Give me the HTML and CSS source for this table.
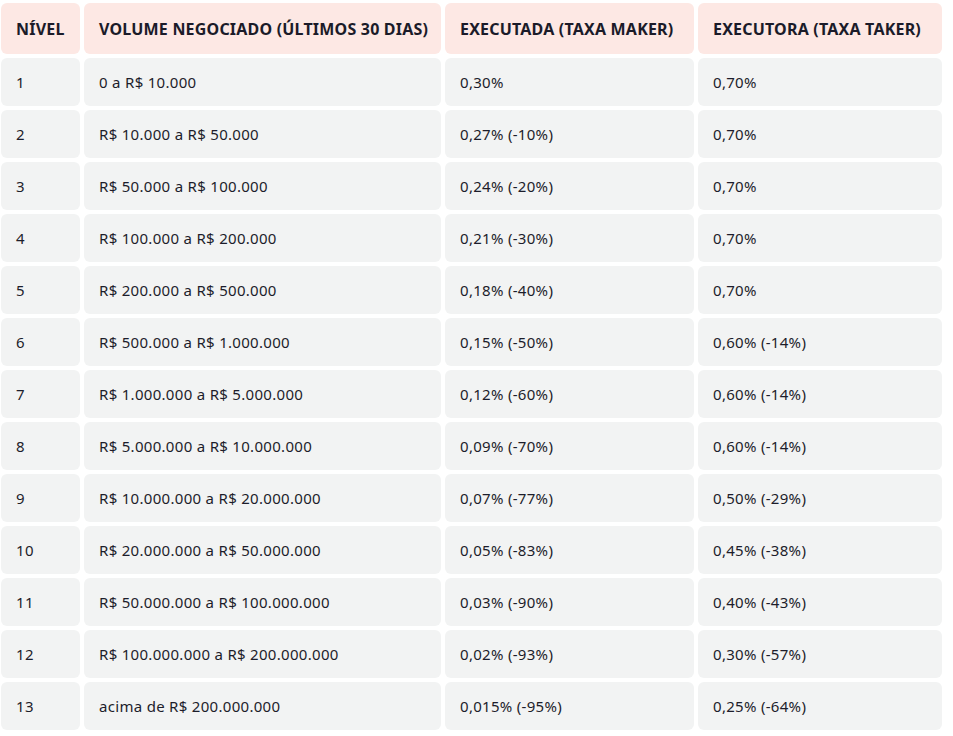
FILE: index.html
```html
<!DOCTYPE html>
<html lang="pt-BR">
<head>
<meta charset="utf-8">
<link rel="stylesheet" href="styles.css">
</head>
<body>
<div class="fees">
  <div class="cell head">NÍVEL</div>
  <div class="cell head">VOLUME NEGOCIADO (ÚLTIMOS 30 DIAS)</div>
  <div class="cell head">EXECUTADA (TAXA MAKER)</div>
  <div class="cell head">EXECUTORA (TAXA TAKER)</div>

  <div class="cell">1</div><div class="cell">0 a R$ 10.000</div><div class="cell">0,30%</div><div class="cell">0,70%</div>
  <div class="cell">2</div><div class="cell">R$ 10.000 a R$ 50.000</div><div class="cell">0,27% (-10%)</div><div class="cell">0,70%</div>
  <div class="cell">3</div><div class="cell">R$ 50.000 a R$ 100.000</div><div class="cell">0,24% (-20%)</div><div class="cell">0,70%</div>
  <div class="cell">4</div><div class="cell">R$ 100.000 a R$ 200.000</div><div class="cell">0,21% (-30%)</div><div class="cell">0,70%</div>
  <div class="cell">5</div><div class="cell">R$ 200.000 a R$ 500.000</div><div class="cell">0,18% (-40%)</div><div class="cell">0,70%</div>
  <div class="cell">6</div><div class="cell">R$ 500.000 a R$ 1.000.000</div><div class="cell">0,15% (-50%)</div><div class="cell">0,60% (-14%)</div>
  <div class="cell">7</div><div class="cell">R$ 1.000.000 a R$ 5.000.000</div><div class="cell">0,12% (-60%)</div><div class="cell">0,60% (-14%)</div>
  <div class="cell">8</div><div class="cell">R$ 5.000.000 a R$ 10.000.000</div><div class="cell">0,09% (-70%)</div><div class="cell">0,60% (-14%)</div>
  <div class="cell">9</div><div class="cell">R$ 10.000.000 a R$ 20.000.000</div><div class="cell">0,07% (-77%)</div><div class="cell">0,50% (-29%)</div>
  <div class="cell">10</div><div class="cell">R$ 20.000.000 a R$ 50.000.000</div><div class="cell">0,05% (-83%)</div><div class="cell">0,45% (-38%)</div>
  <div class="cell">11</div><div class="cell">R$ 50.000.000 a R$ 100.000.000</div><div class="cell">0,03% (-90%)</div><div class="cell">0,40% (-43%)</div>
  <div class="cell">12</div><div class="cell">R$ 100.000.000 a R$ 200.000.000</div><div class="cell">0,02% (-93%)</div><div class="cell">0,30% (-57%)</div>
  <div class="cell">13</div><div class="cell">acima de R$ 200.000.000</div><div class="cell">0,015% (-95%)</div><div class="cell">0,25% (-64%)</div>
</div>
</body>
</html>
```
FILE: styles.css
```css
html, body {
  margin: 0;
  background: #ffffff;
}
body {
  font-family: "Noto Sans", "Open Sans", sans-serif;
  color: #1d1d2b;
}
.fees {
  display: grid;
  grid-template-columns: 79px 357px 249px 244px;
  grid-auto-rows: 48px;
  grid-template-rows: 51px;
  gap: 4px;
  padding: 3px 0 0 1px;
}
.cell {
  display: flex;
  align-items: center;
  padding: 0 15px;
  background: #f2f3f3;
  border-radius: 6px;
  font-size: 15px;
  letter-spacing: 0.3px;
  white-space: nowrap;
}
.cell.head {
  background: #fde8e4;
  font-weight: 700;
  font-size: 16px;
  letter-spacing: 0.2px;
  color: #1b1b29;
}
```
